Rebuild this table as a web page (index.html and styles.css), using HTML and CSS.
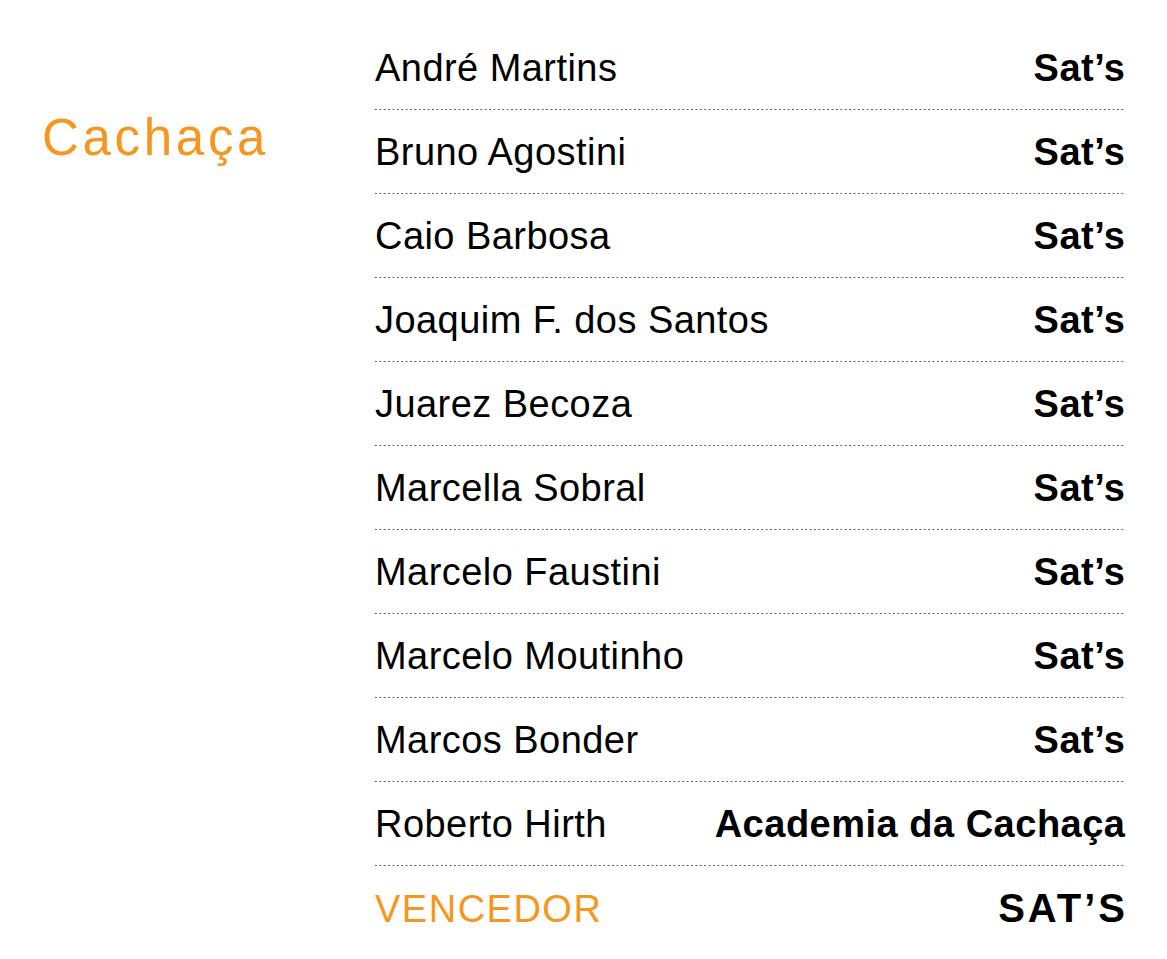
FILE: index.html
```html
<!DOCTYPE html>
<html lang="pt">
<head>
<meta charset="utf-8">
<title>Cachaça</title>
<link rel="stylesheet" href="styles.css">
</head>
<body>
<main class="page">
  <aside class="category">
    <h2 class="category-title">Cachaça</h2>
  </aside>
  <section class="votes">
    <div class="row"><span class="judge">André Martins</span><span class="pick">Sat’s</span></div>
    <div class="row"><span class="judge">Bruno Agostini</span><span class="pick">Sat’s</span></div>
    <div class="row"><span class="judge">Caio Barbosa</span><span class="pick">Sat’s</span></div>
    <div class="row"><span class="judge">Joaquim F. dos Santos</span><span class="pick">Sat’s</span></div>
    <div class="row"><span class="judge">Juarez Becoza</span><span class="pick">Sat’s</span></div>
    <div class="row"><span class="judge">Marcella Sobral</span><span class="pick">Sat’s</span></div>
    <div class="row"><span class="judge">Marcelo Faustini</span><span class="pick">Sat’s</span></div>
    <div class="row"><span class="judge">Marcelo Moutinho</span><span class="pick">Sat’s</span></div>
    <div class="row"><span class="judge">Marcos Bonder</span><span class="pick">Sat’s</span></div>
    <div class="row"><span class="judge">Roberto Hirth</span><span class="pick">Academia da Cachaça</span></div>
    <div class="row row-winner"><span class="judge winner-label">VENCEDOR</span><span class="pick winner-name">SAT’S</span></div>
  </section>
</main>
</body>
</html>
```
FILE: styles.css
```css
html, body {
  margin: 0;
  padding: 0;
  background: #ffffff;
}
body {
  font-family: "Liberation Sans", Arial, sans-serif;
  color: #000;
}
.page {
  display: flex;
  padding: 26px 42px 0 42px;
}
.category {
  width: 333px;
  flex: none;
  padding-top: 84px;
}
.category-title {
  margin: 0;
  font-weight: 400;
  font-size: 51px;
  line-height: 56px;
  letter-spacing: 3.7px;
  color: #f7961e;
}
.votes {
  flex: 1;
  display: flex;
  flex-direction: column;
}
.row {
  display: flex;
  justify-content: space-between;
  align-items: baseline;
  padding: 20px 0 19px;
  line-height: 44px;
  font-size: 38px;
  background-image: linear-gradient(to right, #555 0, #555 1.5px, transparent 1.5px);
  background-size: 4.4px 1px;
  background-repeat: repeat-x;
  background-position: left bottom;
  border-bottom: 1px solid transparent;
  background-origin: border-box;
}
.row-winner {
  background-image: none;
}
.judge {
  font-weight: 400;
  letter-spacing: 0.45px;
}
.pick {
  font-weight: 700;
  letter-spacing: 0.5px;
  margin-right: -0.5px;
}
.winner-label {
  color: #f7961e;
  letter-spacing: 1.5px;
}
.winner-name {
  font-size: 40px;
  letter-spacing: 3px;
  margin-right: -3px;
}
```
